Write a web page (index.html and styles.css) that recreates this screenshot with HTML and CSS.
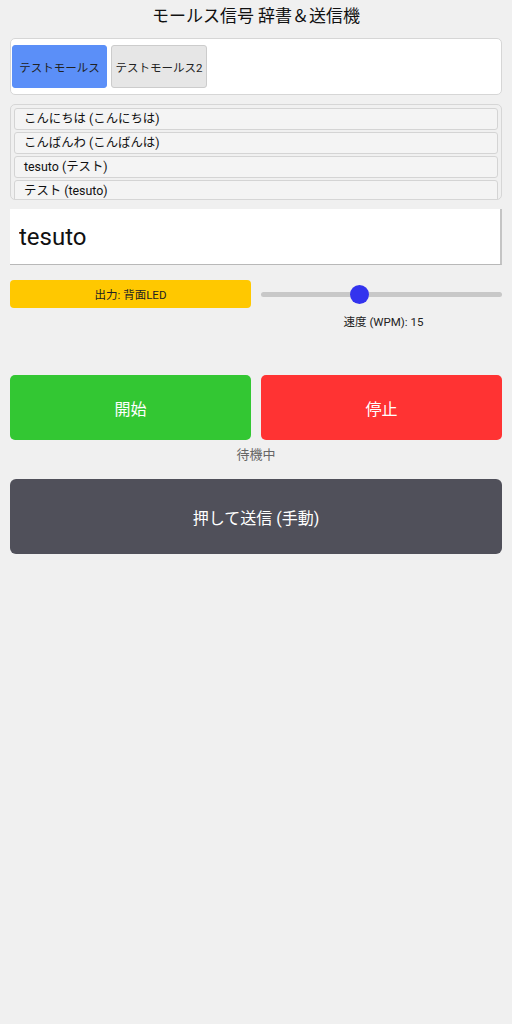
FILE: index.html
```html
<!DOCTYPE html>
<html lang="ja">

<head>
    <meta charset="UTF-8">
    <meta name="viewport" content="width=device-width, initial-scale=1.0">
    <title>モールス信号 辞書＆送信機</title>
    <link rel="stylesheet" href="styles.css">
</head>

<body>
    <h1 class="title">モールス信号 辞書＆送信機</h1>
    <div class="tabs">
        <button class="tab tab_current">テストモールス</button>
        <button class="tab">テストモールス2</button>
    </div>
    <ul class="dict">
        <li>こんにちは (こんにちは)</li>
        <li>こんばんわ (こんばんは)</li>
        <li>tesuto (テスト)</li>
        <li>テスト (tesuto)</li>
    </ul>
    <input class="word" type="text" value="tesuto">
    <div class="controls">
        <button class="output">出力: 背面LED</button>
        <div class="speed">
            <input class="range" type="range" min="5" max="30" value="15">
            <span class="speed_label">速度 (WPM): 15</span>
        </div>
    </div>
    <div class="actions">
        <button class="btn start">開始</button>
        <button class="btn stop">停止</button>
    </div>
    <p class="status">待機中</p>
    <button class="manual">押して送信 (手動)</button>
</body>

</html>
```

FILE: styles.css
```css
* {
    margin: 0;
    padding: 0;
    box-sizing: border-box;
}

body {
    padding: 0 10px;
    background-color: #f0f0f0;
    font-family: Roboto, "Noto Sans CJK JP", sans-serif;
    color: #111;
}

button {
    font-family: inherit;
    border: 0;
    cursor: pointer;
}

.title {
    padding: 2px 0;
    margin-bottom: 6px;
    line-height: 28px;
    font-size: 17px;
    font-weight: normal;
    text-align: center;
}

.tabs {
    display: flex;
    gap: 4px;
    padding: 6px 1px;
    background-color: #fff;
    border: 1px solid #d6d6d6;
    border-radius: 5px;
}

.tab {
    width: 96px;
    height: 43px;
    padding: 0;
    white-space: nowrap;
    font-size: 11.5px;
    color: #222;
    background-color: #e6e6e6;
    border: 1px solid #ccc;
    border-radius: 3px;
}

.tab.tab_current {
    width: 95px;
    background-color: #5b8ff8;
    border-color: #5b8ff8;
}

.dict {
    display: flex;
    flex-direction: column;
    gap: 2px;
    height: 96px;
    margin-top: 9px;
    padding: 3px;
    list-style: none;
    border: 1px solid #d6d6d6;
    border-radius: 5px;
    overflow: hidden;
}

.dict li {
    flex-shrink: 0;
    height: 22px;
    padding-left: 9px;
    line-height: 20px;
    font-size: 12.4px;
    background-color: #f4f4f4;
    border: 1px solid #d4d4d4;
    border-radius: 3px;
}

.word {
    display: block;
    width: 100%;
    height: 56px;
    margin-top: 9px;
    padding-left: 9px;
    font-family: inherit;
    font-size: 24px;
    color: #111;
    background-color: #fff;
    border: 0;
    border-bottom: 1px solid #b8b8b8;
    border-right: 2px solid #c4c4c4;
    outline: none;
}

.controls {
    display: grid;
    grid-template-columns: 1fr 1fr;
    gap: 10px;
    margin-top: 15px;
}

.output {
    height: 28px;
    font-size: 11.5px;
    color: #222;
    background-color: #ffc800;
    border-radius: 4px;
}

.speed {
    display: flex;
    flex-direction: column;
    align-items: center;
}

.range {
    width: 100%;
    height: 28px;
    margin: 0;
    background: transparent;
    -webkit-appearance: none;
    appearance: none;
}

.range::-webkit-slider-runnable-track {
    height: 5px;
    background-color: #c8c8c8;
    border-radius: 3px;
}

.range::-webkit-slider-thumb {
    -webkit-appearance: none;
    width: 19px;
    height: 19px;
    margin-top: -7px;
    background-color: #3333ee;
    border-radius: 50%;
}

.speed_label {
    margin-top: 6px;
    padding-left: 4px;
    line-height: 16px;
    font-size: 11.5px;
    color: #222;
}

.actions {
    display: grid;
    grid-template-columns: 1fr 1fr;
    gap: 10px;
    margin-top: 45px;
}

.btn {
    height: 65px;
    font-size: 16px;
    color: #fff;
    border-radius: 5px;
}

.start {
    background-color: #33c733;
}

.stop {
    background-color: #ff3333;
}

.status {
    margin-top: 5px;
    line-height: 20px;
    font-size: 13px;
    color: #666;
    text-align: center;
}

.manual {
    display: block;
    width: 100%;
    height: 75px;
    margin-top: 14px;
    font-size: 16px;
    color: #fff;
    background-color: #50505a;
    border-radius: 6px;
}
```
